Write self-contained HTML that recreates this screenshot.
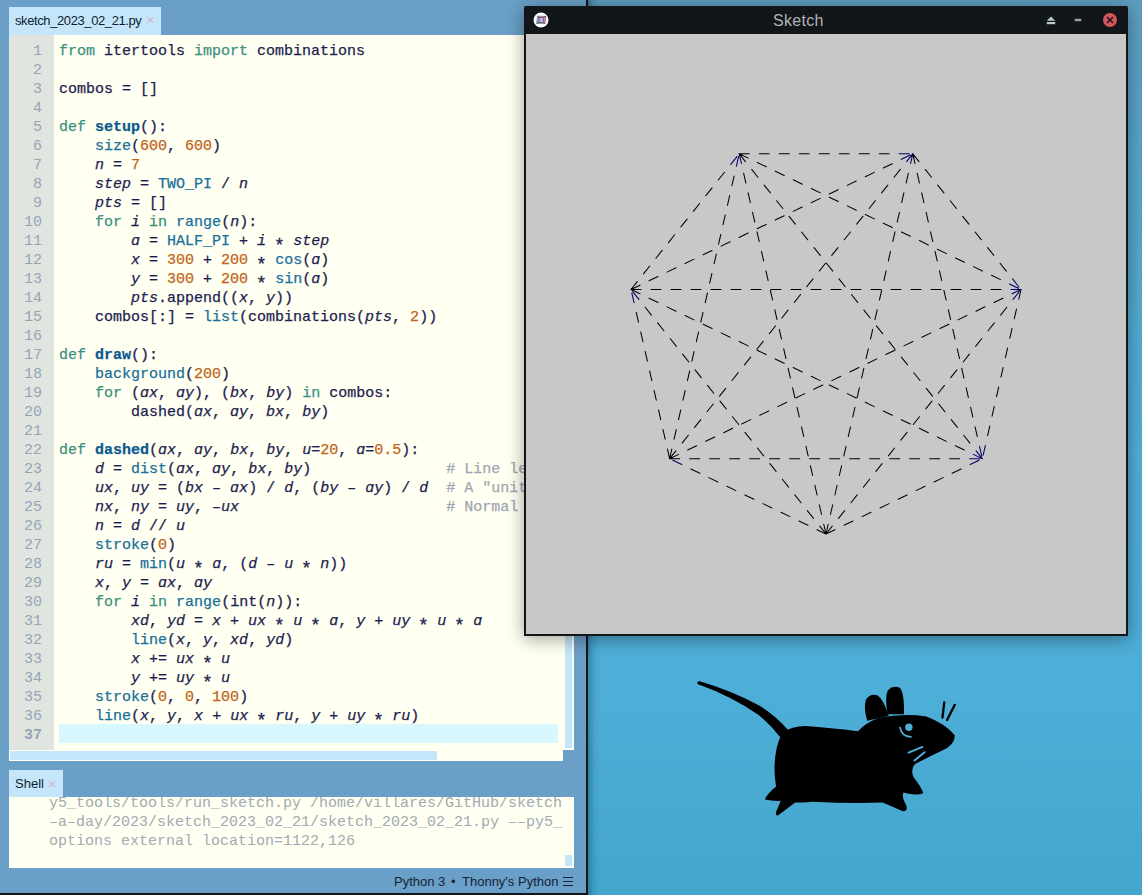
<!DOCTYPE html>
<html><head><meta charset="utf-8">
<style>
*{margin:0;padding:0;box-sizing:border-box}
html,body{width:1142px;height:895px;overflow:hidden}
body{position:relative;background:#4aa6d0;font-family:"Liberation Sans",sans-serif}
.abs{position:absolute}
#desk{left:588px;top:0;width:554px;height:895px;background:linear-gradient(90deg,rgba(0,30,60,.3) 0px,rgba(0,30,60,.08) 6px,rgba(0,30,60,0) 12px),linear-gradient(180deg,#5e9dbf 0,#57a5ca 150px,#50aed7 450px,#4daed7 700px,#44a6cd 895px)}
#thonny{left:0;top:0;width:586px;height:893px;background:#6a9fc7}
#tborder{left:586px;top:0;width:2px;height:895px;background:#121618}
#bborder{left:0;top:893px;width:588px;height:2px;background:#121618}
.tab{background:#c4e5fa;color:#0e1e2e;font-size:13px}
#tab1{left:9px;top:7px;width:152px;height:28px}
#tab1 span,#tab2 span{position:absolute;top:6px;left:6px;white-space:nowrap}
#tab1 b{font-weight:normal;letter-spacing:-0.4px}
.x{color:#c9a0aa;font-size:12px}
#editor{left:9px;top:35px;width:554px;height:715px;background:#fffff2;overflow:hidden}
#gutter{left:0;top:0;width:45px;height:715px;background:#e1e5e0}
#nums{left:0;top:7px;width:33px;text-align:right;color:#93a5b8}
.mono{font-family:"Liberation Mono",monospace;font-size:15px;line-height:19px}
.ln{white-space:pre;height:19px}
#shtext{white-space:pre}
#code{left:50px;top:7px;color:#1d1d4f;-webkit-text-stroke:0.25px currentColor}
#hl{left:50px;top:689px;width:499px;height:19px;background:#d8f8ff}
i{font-style:normal}
i.k{color:#3b8f7f}
i.b{color:#19709c}
i.f{color:#0a5a8e;font-weight:bold}
i.v{font-style:italic}
i.o{color:#c0651a}
i.c{color:#9da7b2}
i.st{display:inline-block;width:9px;transform:translateY(5.5px) scale(1.2)}
#hscroll{left:9px;top:750px;width:554px;height:11px;background:#fffff2;border-bottom:1px solid #fffff2}
#hthumb{left:1px;top:1px;width:427px;height:9px;background:#c4e5fa}
#vscroll{left:563px;top:35px;width:11px;height:715px;background:#fffff2}
#vthumb{left:2px;top:0px;width:7px;height:713px;background:#c4e5fa}
#tab2{left:9px;top:770px;width:54px;height:28px}
#shell{left:9px;top:797px;width:565px;height:71px;background:#fffff2;overflow:hidden}
#shtext{left:40px;top:-3px;color:#a2aab3}
#sthumb{left:556px;top:58px;width:7px;height:11px;background:#c4e5fa}
#status,#status2,#status3{left:394px;top:874px;font-size:13px;color:#142438;white-space:nowrap}
#status2{left:451px}
#status3{left:462px}
.menu{left:563px;top:877px;width:10px;height:9px;background:linear-gradient(#142438 0,#142438 1.4px,transparent 1.4px,transparent 3.8px,#142438 3.8px,#142438 5.2px,transparent 5.2px,transparent 7.6px,#142438 7.6px,#142438 9px)}
#sketch{left:524px;top:6px;width:604px;height:630px;background:#121618;border-radius:2px 2px 0 0;box-shadow:0 3px 18px rgba(0,0,0,.38)}
#title{left:249px;top:1px;width:60px;height:28px;color:#aeb4ba;font-size:16px;line-height:28px;letter-spacing:0.3px;white-space:nowrap}
#canvas{left:2px;top:28px;width:600px;height:600px;background:#c8c8c8}
</style></head><body>
<div id="desk" class="abs"></div>
<svg id="mouse" class="abs" style="left:680px;top:660px" width="300" height="170" viewBox="-456.8 -114.2 1713 970.7">
 <path d="M-358 14Q-352 4 -340 8Q-160 60 0 148Q90 205 160 285L118 330Q60 255 -10 198Q-170 90 -350 26Q-362 22 -358 14Z" fill="#000"/>
 <path d="M130 300Q180 262 260 262Q400 272 560 292Q600 245 680 215Q820 188 950 208Q1060 250 1112 315Q1115 370 1040 402Q960 440 885 480Q855 515 880 560Q920 610 932 645Q905 665 820 642Q805 660 835 715Q845 752 815 750Q760 725 700 700Q500 705 300 695Q230 700 200 700Q150 740 100 775Q80 768 100 735Q115 700 118 690Q70 692 28 682Q40 650 92 608Q72 500 95 390Q110 330 130 300Z" fill="#000"/>
 <path d="M612 232Q590 160 605 112Q630 75 672 88Q705 110 735 205Z" fill="#000"/>
 <path d="M728 195Q712 100 730 58Q760 28 800 45Q825 80 822 195Z" fill="#000"/>
 <path d="M1052 128L1042 215M1112 142L1068 228" stroke="#000" stroke-width="13" stroke-linecap="round"/>
 <circle cx="850" cy="270" r="21" fill="#4daed7"/>
 <path d="M800 272Q808 322 862 325" stroke="#4daed7" stroke-width="10" fill="none" stroke-linecap="round"/>
 <path d="M848 415L928 382M882 460L940 412" stroke="#4daed7" stroke-width="11" stroke-linecap="round"/>
</svg>
<div id="thonny" class="abs">
 <div id="tab1" class="abs tab"><span><b>sketch_2023_02_21.py</b></span><svg class="abs" style="left:138px;top:10px" width="8" height="8"><path d="M0.5 0.5L6 6M6 0.5L0.5 6" stroke="#d79fb3" stroke-width="1"/></svg></div>
 <div id="editor" class="abs">
  <div id="gutter" class="abs"><div id="nums" class="abs mono"><div class=ln>1</div>
<div class=ln>2</div>
<div class=ln>3</div>
<div class=ln>4</div>
<div class=ln>5</div>
<div class=ln>6</div>
<div class=ln>7</div>
<div class=ln>8</div>
<div class=ln>9</div>
<div class=ln>10</div>
<div class=ln>11</div>
<div class=ln>12</div>
<div class=ln>13</div>
<div class=ln>14</div>
<div class=ln>15</div>
<div class=ln>16</div>
<div class=ln>17</div>
<div class=ln>18</div>
<div class=ln>19</div>
<div class=ln>20</div>
<div class=ln>21</div>
<div class=ln>22</div>
<div class=ln>23</div>
<div class=ln>24</div>
<div class=ln>25</div>
<div class=ln>26</div>
<div class=ln>27</div>
<div class=ln>28</div>
<div class=ln>29</div>
<div class=ln>30</div>
<div class=ln>31</div>
<div class=ln>32</div>
<div class=ln>33</div>
<div class=ln>34</div>
<div class=ln>35</div>
<div class=ln>36</div>
<div class=ln style="font-weight:bold">37</div></div></div>
  <div id="hl" class="abs"></div>
  <div id="code" class="abs mono"><div class=ln><i class=k>from</i> itertools <i class=k>import</i> combinations</div>
<div class=ln></div>
<div class=ln>combos = []</div>
<div class=ln></div>
<div class=ln><i class=k>def</i> <i class=f>setup</i>():</div>
<div class=ln>    <i class=b>size</i>(<i class=o>600</i>, <i class=o>600</i>)</div>
<div class=ln>    <i class=v>n</i> = <i class=o>7</i></div>
<div class=ln>    <i class=v>step</i> = <i class=b>TWO_PI</i> / <i class=v>n</i></div>
<div class=ln>    <i class=v>pts</i> = []</div>
<div class=ln>    <i class=k>for</i> <i class=v>i</i> <i class=k>in</i> <i class=b>range</i>(<i class=v>n</i>):</div>
<div class=ln>        <i class=v>&#593;</i> = <i class=b>HALF_PI</i> + <i class=v>i</i> <i class=st>*</i> <i class=v>step</i></div>
<div class=ln>        <i class=v>x</i> = <i class=o>300</i> + <i class=o>200</i> <i class=st>*</i> <i class=b>cos</i>(<i class=v>&#593;</i>)</div>
<div class=ln>        <i class=v>y</i> = <i class=o>300</i> + <i class=o>200</i> <i class=st>*</i> <i class=b>sin</i>(<i class=v>&#593;</i>)</div>
<div class=ln>        <i class=v>pts</i>.append((<i class=v>x</i>, <i class=v>y</i>))</div>
<div class=ln>    combos[:] = <i class=b>list</i>(combinations(<i class=v>pts</i>, <i class=o>2</i>))</div>
<div class=ln></div>
<div class=ln><i class=k>def</i> <i class=f>draw</i>():</div>
<div class=ln>    <i class=b>background</i>(<i class=o>200</i>)</div>
<div class=ln>    <i class=k>for</i> (<i class=v>&#593;x</i>, <i class=v>&#593;y</i>), (<i class=v>bx</i>, <i class=v>by</i>) <i class=k>in</i> combos:</div>
<div class=ln>        dashed(<i class=v>&#593;x</i>, <i class=v>&#593;y</i>, <i class=v>bx</i>, <i class=v>by</i>)</div>
<div class=ln></div>
<div class=ln><i class=k>def</i> <i class=f>dashed</i>(<i class=v>&#593;x</i>, <i class=v>&#593;y</i>, <i class=v>bx</i>, <i class=v>by</i>, <i class=v>u</i>=<i class=o>20</i>, <i class=v>&#593;</i>=<i class=o>0.5</i>):</div>
<div class=ln>    <i class=v>d</i> = <i class=b>dist</i>(<i class=v>&#593;x</i>, <i class=v>&#593;y</i>, <i class=v>bx</i>, <i class=v>by</i>)               <i class=c># Line length</i></div>
<div class=ln>    <i class=v>ux</i>, <i class=v>uy</i> = (<i class=v>bx</i> &#8211; <i class=v>&#593;x</i>) / <i class=v>d</i>, (<i class=v>by</i> &#8211; <i class=v>&#593;y</i>) / <i class=v>d</i>  <i class=c># A &quot;unit&quot; vector</i></div>
<div class=ln>    <i class=v>nx</i>, <i class=v>ny</i> = <i class=v>uy</i>, &#8211;<i class=v>ux</i>                       <i class=c># Normal vector</i></div>
<div class=ln>    <i class=v>n</i> = <i class=v>d</i> // <i class=v>u</i></div>
<div class=ln>    <i class=b>stroke</i>(<i class=o>0</i>)</div>
<div class=ln>    <i class=v>ru</i> = <i class=b>min</i>(<i class=v>u</i> <i class=st>*</i> <i class=v>&#593;</i>, (<i class=v>d</i> &#8211; <i class=v>u</i> <i class=st>*</i> <i class=v>n</i>))</div>
<div class=ln>    <i class=v>x</i>, <i class=v>y</i> = <i class=v>&#593;x</i>, <i class=v>&#593;y</i></div>
<div class=ln>    <i class=k>for</i> <i class=v>i</i> <i class=k>in</i> <i class=b>range</i>(int(<i class=v>n</i>)):</div>
<div class=ln>        <i class=v>xd</i>, <i class=v>yd</i> = <i class=v>x</i> + <i class=v>ux</i> <i class=st>*</i> <i class=v>u</i> <i class=st>*</i> <i class=v>&#593;</i>, <i class=v>y</i> + <i class=v>uy</i> <i class=st>*</i> <i class=v>u</i> <i class=st>*</i> <i class=v>&#593;</i></div>
<div class=ln>        <i class=b>line</i>(<i class=v>x</i>, <i class=v>y</i>, <i class=v>xd</i>, <i class=v>yd</i>)</div>
<div class=ln>        <i class=v>x</i> += <i class=v>ux</i> <i class=st>*</i> <i class=v>u</i></div>
<div class=ln>        <i class=v>y</i> += <i class=v>uy</i> <i class=st>*</i> <i class=v>u</i></div>
<div class=ln>    <i class=b>stroke</i>(<i class=o>0</i>, <i class=o>0</i>, <i class=o>100</i>)</div>
<div class=ln>    <i class=b>line</i>(<i class=v>x</i>, <i class=v>y</i>, <i class=v>x</i> + <i class=v>ux</i> <i class=st>*</i> <i class=v>ru</i>, <i class=v>y</i> + <i class=v>uy</i> <i class=st>*</i> <i class=v>ru</i>)</div>
<div class=ln></div></div>
 </div>
 <div id="vscroll" class="abs"><div id="vthumb" class="abs"></div></div>
 <div id="hscroll" class="abs"><div id="hthumb" class="abs"></div></div>
 <div id="tab2" class="abs tab"><span>Shell</span><svg class="abs" style="left:40px;top:11px" width="8" height="8"><path d="M0.5 0.5L6 6M6 0.5L0.5 6" stroke="#d79fb3" stroke-width="1"/></svg></div>
 <div id="shell" class="abs">
  <div id="shtext" class="abs mono">y5_tools/tools/run_sketch.py /home/villares/GitHub/sketch
&#8211;a&#8211;day/2023/sketch_2023_02_21/sketch_2023_02_21.py &#8211;&#8211;py5_
options external location=1122,126</div>
  <div id="sthumb" class="abs"></div>
 </div>
 <div id="status" class="abs">Python 3</div><div id="status2" class="abs">&#8226;</div><div id="status3" class="abs">Thonny's Python</div><div class="abs menu"></div>
</div>
<div id="tborder" class="abs"></div>
<div id="bborder" class="abs"></div>
<div id="sketch" class="abs">
 <div id="title" class="abs">Sketch</div>
 <svg class="abs" style="left:0;top:0" width="604" height="28" viewBox="0 0 604 28">
  <circle cx="17" cy="14" r="7.5" fill="#fff"/>
  <path d="M13.5 10.2L21.8 10.4L19.6 11.6L15 11.6Z" fill="#e08ed6" stroke="#2a2a3a" stroke-width=".45"/>
  <path d="M21.8 10.4L21 17.6L19.6 16.3L19.6 11.6Z" fill="#f28aa0" stroke="#2a2a3a" stroke-width=".45"/>
  <path d="M15 16.3L19.6 16.3L21 17.6L12.6 17.4Z" fill="#a6d6dc" stroke="#2a2a3a" stroke-width=".45"/>
  <path d="M13.5 10.2L15 11.6L15 16.3L12.6 17.4Z" fill="#8ec8ea" stroke="#2a2a3a" stroke-width=".45"/>
  <rect x="15" y="11.6" width="4.6" height="4.7" fill="#c8a8e2" stroke="#2a2a3a" stroke-width=".45"/>
  <path d="M522.8 14.8L527 10.6L531.2 14.8Z" fill="#b9c8c8"/>
  <rect x="522.8" y="16" width="8.4" height="2.2" fill="#b9c8c8"/>
  <rect x="550.8" y="12.8" width="6.4" height="2.4" fill="#9ca4a6"/>
  <circle cx="586" cy="14" r="7" fill="#d6545c"/>
  <path d="M583 11L589 17M589 11L583 17" stroke="#161a1c" stroke-width="1.6"/>
 </svg>
 <div id="canvas" class="abs"><svg style="display:block" width="600" height="600" viewBox="0 0 600 600"><path d="M300.00 500.00L290.99 495.66M281.98 491.32L272.97 486.98M263.96 482.64L254.95 478.31M245.94 473.97L236.93 469.63M227.92 465.29L218.91 460.95M209.90 456.61L200.89 452.27M191.88 447.93L182.87 443.60M173.86 439.26L164.85 434.92M300.00 500.00L293.77 492.18M287.53 484.36L281.30 476.55M275.06 468.73L268.83 460.91M262.59 453.09L256.36 445.27M250.12 437.45L243.89 429.64M237.65 421.82L231.42 414.00M225.18 406.18L218.95 398.36M212.71 390.54L206.48 382.73M200.24 374.91L194.01 367.09M187.77 359.27L181.54 351.45M175.30 343.63L169.07 335.82M162.83 328.00L156.60 320.18M150.36 312.36L144.13 304.54M137.89 296.72L131.66 288.91M125.42 281.09L119.19 273.27M300.00 500.00L297.77 490.25M295.55 480.50L293.32 470.75M291.10 461.00L288.87 451.25M286.65 441.50L284.42 431.76M282.20 422.01L279.97 412.26M277.75 402.51L275.52 392.76M273.30 383.01L271.07 373.26M268.85 363.51L266.62 353.76M264.40 344.01L262.17 334.26M259.95 324.51L257.72 314.76M255.50 305.01L253.27 295.27M251.05 285.52L248.82 275.77M246.59 266.02L244.37 256.27M242.14 246.52L239.92 236.77M237.69 227.02L235.47 217.27M233.24 207.52L231.02 197.77M228.79 188.02L226.57 178.27M224.34 168.52L222.12 158.78M219.89 149.03L217.67 139.28M300.00 500.00L302.23 490.25M304.45 480.50L306.68 470.75M308.90 461.00L311.13 451.25M313.35 441.50L315.58 431.76M317.80 422.01L320.03 412.26M322.25 402.51L324.48 392.76M326.70 383.01L328.93 373.26M331.15 363.51L333.38 353.76M335.60 344.01L337.83 334.26M340.05 324.51L342.28 314.76M344.50 305.01L346.73 295.27M348.95 285.52L351.18 275.77M353.41 266.02L355.63 256.27M357.86 246.52L360.08 236.77M362.31 227.02L364.53 217.27M366.76 207.52L368.98 197.77M371.21 188.02L373.43 178.27M375.66 168.52L377.88 158.78M380.11 149.03L382.33 139.28M300.00 500.00L306.23 492.18M312.47 484.36L318.70 476.55M324.94 468.73L331.17 460.91M337.41 453.09L343.64 445.27M349.88 437.45L356.11 429.64M362.35 421.82L368.58 414.00M374.82 406.18L381.05 398.36M387.29 390.54L393.52 382.73M399.76 374.91L405.99 367.09M412.23 359.27L418.46 351.45M424.70 343.63L430.93 335.82M437.17 328.00L443.40 320.18M449.64 312.36L455.87 304.54M462.11 296.72L468.34 288.91M474.58 281.09L480.81 273.27M300.00 500.00L309.01 495.66M318.02 491.32L327.03 486.98M336.04 482.64L345.05 478.31M354.06 473.97L363.07 469.63M372.08 465.29L381.09 460.95M390.10 456.61L399.11 452.27M408.12 447.93L417.13 443.60M426.14 439.26L435.15 434.92M143.63 424.70L141.41 414.95M139.18 405.20L136.96 395.45M134.73 385.70L132.51 375.95M130.28 366.20L128.06 356.45M125.83 346.70L123.61 336.95M121.38 327.21L119.16 317.46M116.93 307.71L114.71 297.96M112.48 288.21L110.26 278.46M143.63 424.70L145.86 414.95M148.08 405.20L150.31 395.45M152.53 385.70L154.76 375.95M156.98 366.20L159.21 356.45M161.44 346.70L163.66 336.95M165.89 327.21L168.11 317.46M170.34 307.71L172.56 297.96M174.79 288.21L177.01 278.46M179.24 268.71L181.46 258.96M183.69 249.21L185.91 239.46M188.14 229.71L190.36 219.96M192.59 210.21L194.81 200.46M197.04 190.72L199.26 180.97M201.49 171.22L203.71 161.47M205.94 151.72L208.16 141.97M143.63 424.70L149.87 416.88M156.10 409.06L162.34 401.24M168.57 393.42L174.81 385.61M181.04 377.79L187.28 369.97M193.51 362.15L199.75 354.33M205.98 346.51L212.22 338.70M218.45 330.88L224.69 323.06M230.92 315.24L237.16 307.42M243.39 299.60L249.63 291.79M255.86 283.97L262.10 276.15M268.33 268.33L274.57 260.51M280.80 252.70L287.04 244.88M293.27 237.06L299.51 229.24M305.74 221.42L311.98 213.60M318.21 205.79L324.45 197.97M330.68 190.15L336.92 182.33M343.15 174.51L349.39 166.69M355.62 158.88L361.86 151.06M368.09 143.24L374.32 135.42M143.63 424.70L152.64 420.36M161.65 416.02L170.66 411.68M179.67 407.34L188.68 403.00M197.69 398.66L206.70 394.33M215.71 389.99L224.72 385.65M233.73 381.31L242.74 376.97M251.75 372.63L260.76 368.29M269.77 363.95L278.78 359.62M287.79 355.28L296.80 350.94M305.81 346.60L314.82 342.26M323.83 337.92L332.84 333.58M341.85 329.24L350.86 324.90M359.87 320.57L368.88 316.23M377.89 311.89L386.90 307.55M395.90 303.21L404.91 298.87M413.92 294.53L422.93 290.19M431.94 285.86L440.95 281.52M449.96 277.18L458.97 272.84M467.98 268.50L476.99 264.16M143.63 424.70L153.63 424.70M163.63 424.70L173.63 424.70M183.63 424.70L193.63 424.70M203.63 424.70L213.63 424.70M223.63 424.70L233.63 424.70M243.63 424.70L253.63 424.70M263.63 424.70L273.63 424.70M283.63 424.70L293.63 424.70M303.63 424.70L313.63 424.70M323.63 424.70L333.63 424.70M343.63 424.70L353.63 424.70M363.63 424.70L373.63 424.70M383.63 424.70L393.63 424.70M403.63 424.70L413.63 424.70M423.63 424.70L433.63 424.70M105.01 255.50L111.25 247.68M117.48 239.86L123.72 232.04M129.95 224.22L136.19 216.40M142.42 208.59L148.66 200.77M154.89 192.95L161.13 185.13M167.36 177.31L173.60 169.49M179.83 161.68L186.07 153.86M192.30 146.04L198.54 138.22M105.01 255.50L114.02 251.16M123.03 246.82L132.04 242.48M141.05 238.14L150.06 233.80M159.07 229.46L168.08 225.12M177.09 220.79L186.10 216.45M195.11 212.11L204.12 207.77M213.13 203.43L222.14 199.09M231.15 194.75L240.16 190.41M249.17 186.07L258.18 181.74M267.19 177.40L276.20 173.06M285.21 168.72L294.22 164.38M303.23 160.04L312.24 155.70M321.25 151.36L330.26 147.02M339.27 142.69L348.28 138.35M357.29 134.01L366.30 129.67M105.01 255.50L115.01 255.50M125.01 255.50L135.01 255.50M145.01 255.50L155.01 255.50M165.01 255.50L175.01 255.50M185.01 255.50L195.01 255.50M205.01 255.50L215.01 255.50M225.01 255.50L235.01 255.50M245.01 255.50L255.01 255.50M265.01 255.50L275.01 255.50M285.01 255.50L295.01 255.50M305.01 255.50L315.01 255.50M325.01 255.50L335.01 255.50M345.01 255.50L355.01 255.50M365.01 255.50L375.01 255.50M385.01 255.50L395.01 255.50M405.01 255.50L415.01 255.50M425.01 255.50L435.01 255.50M445.01 255.50L455.01 255.50M465.01 255.50L475.01 255.50M105.01 255.50L114.02 259.83M123.03 264.17L132.04 268.51M141.05 272.85L150.06 277.19M159.07 281.53L168.08 285.87M177.09 290.21L186.10 294.55M195.11 298.88L204.12 303.22M213.13 307.56L222.14 311.90M231.15 316.24L240.16 320.58M249.17 324.92L258.18 329.26M267.19 333.59L276.20 337.93M285.21 342.27L294.22 346.61M303.23 350.95L312.24 355.29M321.25 359.63L330.26 363.97M339.27 368.31L348.28 372.64M357.29 376.98L366.30 381.32M375.31 385.66L384.31 390.00M393.32 394.34L402.33 398.68M411.34 403.02L420.35 407.36M429.36 411.69L438.37 416.03M213.22 119.81L223.22 119.81M233.22 119.81L243.22 119.81M253.22 119.81L263.22 119.81M273.22 119.81L283.22 119.81M293.22 119.81L303.22 119.81M313.22 119.81L323.22 119.81M333.22 119.81L343.22 119.81M353.22 119.81L363.22 119.81M213.22 119.81L222.23 124.15M231.24 128.48L240.25 132.82M249.26 137.16L258.27 141.50M267.28 145.84L276.29 150.18M285.30 154.52L294.31 158.86M303.32 163.19L312.33 167.53M321.34 171.87L330.35 176.21M339.36 180.55L348.37 184.89M357.38 189.23L366.39 193.57M375.40 197.91L384.41 202.24M393.42 206.58L402.43 210.92M411.44 215.26L420.45 219.60M429.46 223.94L438.47 228.28M447.48 232.62L456.48 236.95M465.49 241.29L474.50 245.63M213.22 119.81L219.46 127.62M225.69 135.44L231.93 143.26M238.16 151.08L244.40 158.90M250.63 166.72L256.87 174.53M263.10 182.35L269.34 190.17M275.57 197.99L281.81 205.81M288.04 213.63L294.28 221.44M300.51 229.26L306.75 237.08M312.98 244.90L319.22 252.72M325.45 260.54L331.69 268.35M337.92 276.17L344.16 283.99M350.39 291.81L356.63 299.63M362.86 307.45L369.10 315.26M375.33 323.08L381.57 330.90M387.80 338.72L394.04 346.54M400.27 354.36L406.51 362.17M412.74 369.99L418.97 377.81M425.21 385.63L431.44 393.45M437.68 401.27L443.91 409.08M386.78 119.81L393.01 127.62M399.25 135.44L405.48 143.26M411.72 151.08L417.95 158.90M424.19 166.72L430.42 174.53M436.66 182.35L442.89 190.17M449.13 197.99L455.36 205.81M461.60 213.63L467.83 221.44M474.07 229.26L480.30 237.08M386.78 119.81L389.00 129.56M391.23 139.30L393.45 149.05M395.68 158.80L397.90 168.55M400.13 178.30L402.35 188.05M404.58 197.80L406.80 207.55M409.03 217.30L411.25 227.05M413.48 236.80L415.70 246.55M417.93 256.30L420.15 266.05M422.38 275.79L424.61 285.54M426.83 295.29L429.06 305.04M431.28 314.79L433.51 324.54M435.73 334.29L437.96 344.04M440.18 353.79L442.41 363.54M444.63 373.29L446.86 383.04M449.08 392.79L451.31 402.54M494.99 255.50L492.76 265.25M490.54 274.99L488.31 284.74M486.08 294.49L483.86 304.24M481.63 313.99L479.41 323.74M477.18 333.49L474.96 343.24M472.73 352.99L470.51 362.74M468.28 372.49L466.06 382.24M463.83 391.99L461.61 401.74" stroke="#000" stroke-width="1.05" stroke-linecap="round" fill="none"/><path d="M155.84 430.58L146.84 426.24M112.95 265.45L106.72 257.63M215.44 129.53L213.22 119.81M384.56 129.53L386.78 119.81M487.05 265.45L493.28 257.63M444.16 430.58L453.16 426.24M108.03 268.71L105.81 258.96M210.39 132.22L212.62 122.47M380.56 127.60L386.78 119.81M486.00 259.82L494.99 255.50M443.63 424.70L453.63 424.70M204.77 130.40L211.01 122.58M375.31 125.33L384.31 120.99M485.01 255.50L494.99 255.50M447.38 420.37L456.37 424.70M373.22 119.81L383.22 119.81M483.51 249.97L492.52 254.31M450.15 416.90L456.37 424.70M486.54 244.90L492.77 252.72M453.53 412.28L455.76 422.03M459.38 411.48L457.16 421.23" stroke="#000064" stroke-width="1.05" stroke-linecap="round" fill="none"/></svg></div>
</div>
</body></html>
